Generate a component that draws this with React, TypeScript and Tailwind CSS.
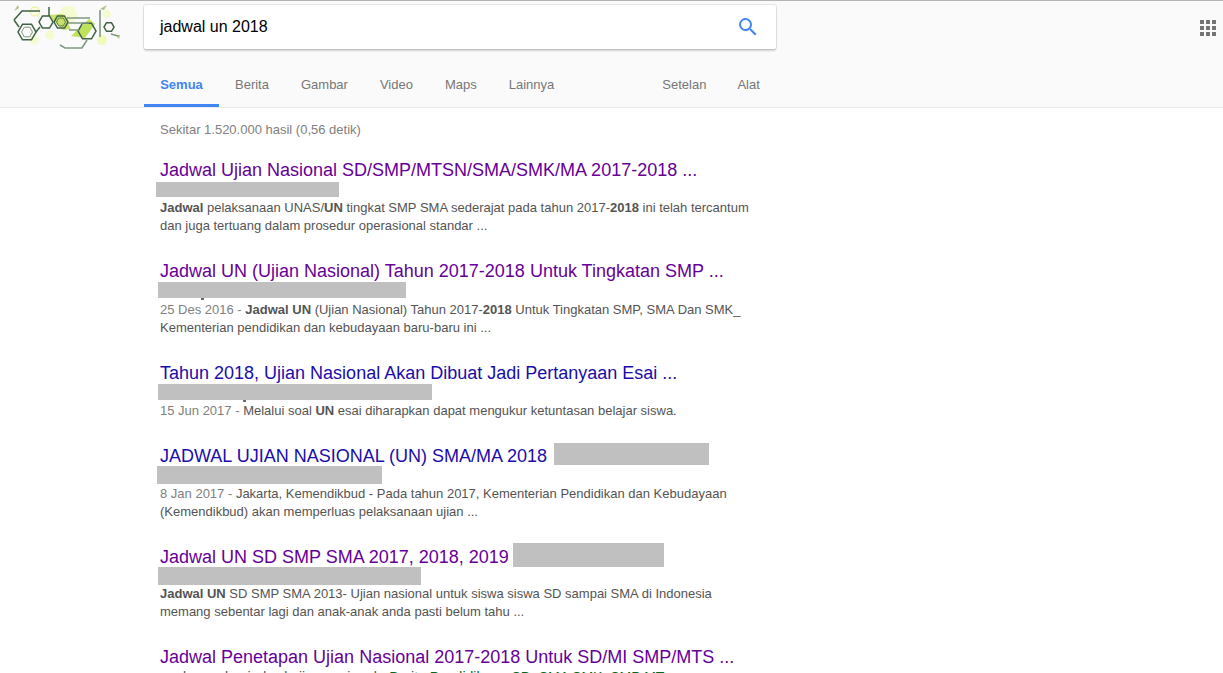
import React from 'react';

const VISITED = 'text-[#660099]';
const FRESH = 'text-[#1a0dab]';

const tabs = ['Berita', 'Gambar', 'Video', 'Maps', 'Lainnya'];

interface ResultProps {
    title: string;
    titleColor: string;
    inlineBar?: string;
    bar: string;
    barRow?: string;
    speck?: string;
    children: React.ReactNode;
}

const Result: React.FC<ResultProps> = ({ title, titleColor, inlineBar, bar, barRow = 'h-[18px]', speck, children }) => (
    <div className="mb-[26px]">
        <div className="flex h-[21px] items-start">
            <span className={`text-[18px] leading-[21px] whitespace-nowrap ${titleColor}`}>{title}</span>
            {inlineBar && <div className={`shrink-0 bg-[#c0c0c0] ${inlineBar}`} />}
        </div>
        <div className={barRow}>
            <div className={`bg-[#c0c0c0] ${bar}`} />
            {speck && <div className={`h-[2px] w-[3px] bg-[#6b6b6b] ${speck}`} />}
        </div>
        <div className="text-[13px] leading-[18px] whitespace-nowrap text-[#545454]">{children}</div>
    </div>
);

const Hex: React.FC<{ cx: number; cy: number; r: number; className: string }> = ({ cx, cy, r, className }) => {
    const points = [0, 60, 120, 180, 240, 300]
        .map((a) => `${cx + r * Math.cos((a * Math.PI) / 180)},${cy + r * Math.sin((a * Math.PI) / 180)}`)
        .join(' ');
    return <polygon points={points} className={className} />;
};

const Logo = () => (
    <svg width="125" height="50" viewBox="0 0 125 50" className="shrink-0">
        <Hex cx={63} cy={10} r={10} className="fill-[#f5fbd0]" />
        <Hex cx={45} cy={30} r={5} className="fill-[#f5fbd0]" />
        <Hex cx={102} cy={9} r={4.5} className="fill-[#f5fbd0]" />
        <Hex cx={97} cy={35} r={5.5} className="fill-[#eff9b8]" />
        <Hex cx={29} cy={35} r={5} className="fill-[#f5fbd0]" />
        <Hex cx={30} cy={6.5} r={5} className="fill-[#fbfde8] stroke-[#e6f08a]" />
        <path d="M43 10 L58 25 L66 24 L58 9 Z" className="fill-[#c9e06c]" />
        <path d="M66 31 L84 14 L90 19 L80 33 Z" className="fill-[#bfe25c]" />
        <path d="M9 6 L14 3 L13 0 Z M95 4 L102 0 L99 5 Z M111 30 L114 34 L115 30 Z" className="fill-[#a9c47c]" />
        <g fill="none" strokeWidth="1.5" className="stroke-[#3f6344]">
            <Hex cx={22} cy={27} r={9} className="" />
            <Hex cx={41} cy={17} r={7} className="" />
            <Hex cx={56} cy={17} r={7} className="" />
            <Hex cx={82} cy={26} r={9} className="" />
            <Hex cx={104} cy={22} r={5} className="" />
            <path d="M9 15 L17 6 L35 6 M9 15 L14 22 M31 27 L35 22 M44 2 L44 11" />
        </g>
        <g fill="none" strokeWidth="1" className="stroke-[#7f9a80]">
            <Hex cx={22} cy={27} r={5.5} className="" />
            <Hex cx={56} cy={17} r={4.5} className="stroke-[#5f8240]" />
        </g>
        <g fill="none" strokeWidth="1.6" className="stroke-[#7f9a80]">
            <path d="M62 13 L85 13 M63 18 L84 18 M55 40 L60 43 L77 43 L82 35 M64 25 L74 25" />
            <path d="M95 5 L95 32 M106 29 L113 31" />
        </g>
    </svg>
);

export default function App() {
    return (
        <div className="h-[673px] overflow-hidden bg-white font-['Liberation_Sans',Arial,sans-serif]">
            <header className="h-[108px] border-t border-b border-t-[#b4b4b4] border-b-[#ebebeb] bg-[#fafafa]">
                <div className="flex h-[48px] items-start pt-1 pl-[5px]">
                    <Logo />
                    <div className="ml-[14px] flex h-[44px] w-[632px] items-center rounded-[2px] bg-white pr-4 pl-4 shadow-[0_2px_2px_0_rgba(0,0,0,0.16),0_0_0_1px_rgba(0,0,0,0.08)]">
                        <span className="text-[16px] text-black">jadwal un 2018</span>
                        <svg viewBox="0 0 24 24" className="ml-auto h-6 w-6 fill-[#4285f4]">
                            <path d="M15.5 14h-.79l-.28-.27A6.471 6.471 0 0 0 16 9.5 6.5 6.5 0 1 0 9.5 16c1.61 0 3.09-.59 4.23-1.57l.27.28v.79l5 4.99L20.49 19l-4.99-5zm-6 0C7.01 14 5 11.99 5 9.5S7.01 5 9.5 5 14 7.01 14 9.5 11.99 14 9.5 14z" />
                        </svg>
                    </div>
                    <div className="mt-[15px] mr-[7px] ml-auto grid grid-cols-3 gap-[2px]">
                        {Array.from({ length: 9 }).map((_, i) => (
                            <div key={i} className="h-1 w-1 bg-[#757575]" />
                        ))}
                    </div>
                </div>
                <nav className="flex h-[58px] items-end pl-[144px] text-[13px] leading-4 text-[#777777]">
                    <div className="h-[42px] w-[75px] border-b-[3px] border-[#4285f4] pt-3 text-center font-bold text-[#4285f4]">Semua</div>
                    {tabs.map((tab) => (
                        <div key={tab} className="h-[42px] px-4 pt-3">{tab}</div>
                    ))}
                    <div className="ml-[76px] h-[42px] px-4 pt-3">Setelan</div>
                    <div className="h-[42px] pt-3 pr-4 pl-[15px]">Alat</div>
                </nav>
            </header>

            <main className="pt-[13px] pl-[160px]">
                <div className="mb-[21px] text-[13px] leading-[18px] whitespace-nowrap text-[#808080]">Sekitar 1.520.000 hasil (0,56 detik)</div>

                <Result
                    title="Jadwal Ujian Nasional SD/SMP/MTSN/SMA/SMK/MA 2017-2018 ..."
                    titleColor={VISITED}
                    bar="ml-[-4px] h-[15px] w-[183px] mt-[1px]"
                    barRow="h-[17px]"
                >
                    <b>Jadwal</b> pelaksanaan UNAS/<b>UN</b> tingkat SMP SMA sederajat pada tahun 2017-<b>2018</b> ini telah tercantum
                    <br />
                    dan juga tertuang dalam prosedur operasional standar ...
                </Result>

                <Result
                    title="Jadwal UN (Ujian Nasional) Tahun 2017-2018 Untuk Tingkatan SMP ..."
                    titleColor={VISITED}
                    bar="ml-[-2px] h-[16px] w-[248px]"
                    barRow="h-[19px]"
                    speck="ml-[41px]"
                >
                    <span className="text-[#808080]">25 Des 2016 - </span>
                    <b>Jadwal UN</b> (Ujian Nasional) Tahun 2017-<b>2018</b> Untuk Tingkatan SMP, SMA Dan SMK_
                    <br />
                    Kementerian pendidikan dan kebudayaan baru-baru ini ...
                </Result>

                <Result
                    title="Tahun 2018, Ujian Nasional Akan Dibuat Jadi Pertanyaan Esai ..."
                    titleColor={FRESH}
                    bar="ml-[-2px] h-[16px] w-[274px]"
                    speck="ml-[83px]"
                >
                    <span className="text-[#808080]">15 Jun 2017 - </span>
                    Melalui soal <b>UN</b> esai diharapkan dapat mengukur ketuntasan belajar siswa.
                </Result>

                <Result
                    title="JADWAL UJIAN NASIONAL (UN) SMA/MA 2018"
                    titleColor={FRESH}
                    inlineBar="ml-[7px] mt-[-3px] h-[22px] w-[155px]"
                    bar="ml-[-3px] h-[18px] w-[225px] mt-[-1px]"
                    barRow="h-[19px]"
                >
                    <span className="text-[#808080]">8 Jan 2017 - </span>
                    Jakarta, Kemendikbud - Pada tahun 2017, Kementerian Pendidikan dan Kebudayaan
                    <br />
                    (Kemendikbud) akan memperluas pelaksanaan ujian ...
                </Result>

                <Result
                    title="Jadwal UN SD SMP SMA 2017, 2018, 2019"
                    titleColor={VISITED}
                    inlineBar="ml-[4px] mt-[-4px] h-[24px] w-[151px]"
                    bar="ml-[-2px] h-[18px] w-[263px] mt-[-1px]"
                >
                    <b>Jadwal UN</b> SD SMP SMA 2013- Ujian nasional untuk siswa siswa SD sampai SMA di Indonesia
                    <br />
                    memang sebentar lagi dan anak-anak anda pasti belum tahu ...
                </Result>

                <div>
                    <div className="h-[21px] text-[18px] leading-[21px] whitespace-nowrap text-[#660099]">Jadwal Penetapan Ujian Nasional 2017-2018 Untuk SD/MI SMP/MTS ...</div>
                    <div className="text-[14px] leading-[18px] whitespace-nowrap text-[#006621]">
                        <span className="ml-[23px] text-[#545454]">kumpulan jadwal ujian nasional</span> - Berita Pendidikan - SD, SMA SMK, SMP MTs
                    </div>
                </div>
            </main>
        </div>
    );
}
